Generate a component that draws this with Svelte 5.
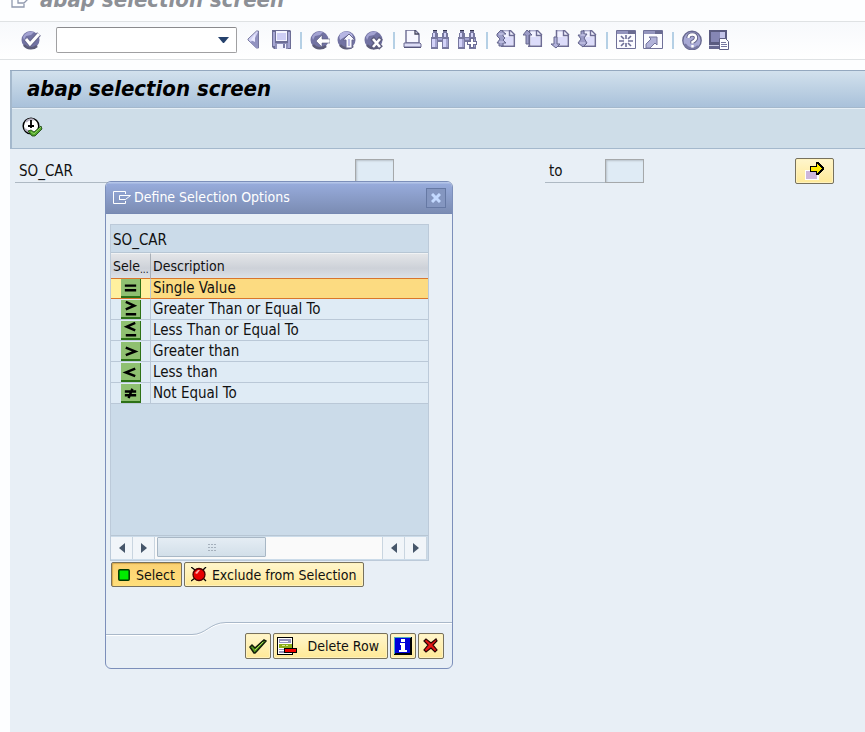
<script>
  const tools = [
    { id: 'left', label: 'Hide command field' },
    { id: 'save', label: 'Save' },
    null,
    { id: 'back', label: 'Back' },
    { id: 'exit', label: 'Exit' },
    { id: 'cancel', label: 'Cancel' },
    null,
    { id: 'print', label: 'Print' },
    { id: 'find', label: 'Find' },
    { id: 'findnext', label: 'Find next' },
    null,
    { id: 'first', label: 'First page' },
    { id: 'prev', label: 'Previous page' },
    { id: 'next', label: 'Next page' },
    { id: 'last', label: 'Last page' },
    null,
    { id: 'session', label: 'Create new session' },
    { id: 'shortcut', label: 'Generate shortcut' },
    null,
    { id: 'help', label: 'Help' },
    { id: 'layout', label: 'Customize local layout' }
  ];

  const options = [
    { text: 'Single Value', d: 'M4 7h12M4 12h12' },
    { text: 'Greater Than or Equal To', d: 'M5 2l9 4-9 4M5 15h11' },
    { text: 'Less Than or Equal To', d: 'M15 2L6 6l9 4M5 15h11' },
    { text: 'Greater than', d: 'M5 6l10 4-10 4' },
    { text: 'Less than', d: 'M15 6L5 10l10 4' },
    { text: 'Not Equal To', d: 'M4 8h12M4 12h12M12 5L8 15' }
  ];

  let selected = $state(0);
</script>

{#snippet pageShape()}
  <path d="M6 0h8l5 5v12H6z" fill="#f1f1ff" />
  <path d="M8 7h9v8H8z" fill="#dcdcfa" />
  <path d="M6 .7h8" stroke="#a9a9c9" stroke-width="1.400" />
  <path d="M6.500 0v16.300M5 16.300h14M18.300 5v12" fill="none" stroke="#6d6c94" stroke-width="1.500" />
  <path d="M13.500 0v5.500H19M14 0l5 5" fill="none" stroke="#6d6c94" stroke-width="1.400" />
{/snippet}

{#snippet ball()}
  <circle cx="9.5" cy="10" r="9" fill="#7273a3" />
  <path d="M2 7a8.5 8.5 0 0 1 11-5l-3 3-5 1-2 4z" fill="#a3a3d2" />
  <path d="M3 15a9 9 0 0 0 13 1" fill="none" stroke="#5c5c78" stroke-width="2.5" />
{/snippet}

{#snippet binoculars()}
  <path d="M3 0h4v3h1v4h4V3h1V0h4v3h1v4h1v12h-7v-7H8v7H1V7h1V3h1z" fill="#77789f" />
  <path d="M3 3h2v4H3zM14 3h2v4h-2zM2 9h3v8H2zM13 9h3v8h-3z" fill="#d2d2f8" />
  <path d="M5 9h2v8H5zM16 9h2v8h-2zM8 8h4v2H8z" fill="#a3a3cf" />
  <path d="M3 0h4v1H3zM13 0h4v1h-4z" fill="#33334f" />
{/snippet}

{#snippet toolIcon(id)}
  <svg width="20" height="20" viewBox="0 0 20 20" aria-hidden="true">
    {#if id === 'ok'}
      {@render ball()}
      <path d="M5 9l4 5 9-10" fill="none" stroke="#66668c" stroke-width="5" />
      <path d="M5 9l4 5 9-10" fill="none" stroke="#fff" stroke-width="3" />
    {:else if id === 'left'}
      <path d="M14.5 1v17h-2L4 10V9l8.500-8z" fill="#d3d3f4" stroke="#77789f" />
      <path d="M14 2v16h-2l-6-6 4-2z" fill="#9293c0" />
      <path d="M11 4v8l-4-2z" fill="#e9e9ff" />
    {:else if id === 'save'}
      <path d="M1 0h18l1 1v18H3l-2-2z" fill="#6c6d95" />
      <path d="M2 2h2v14H2zM17 2h2v16h-2z" fill="#a5a5d3" />
      <path d="M5 1h11v10H5z" fill="#f4f4ff" /><path d="M6 3h9v7H6z" fill="#ceceF5" />
      <path d="M4 13h13v6H4z" fill="#8e8fb9" /><path d="M6 14h9v5H6z" fill="#f2f2ff" />
      <path d="M12 14h2v4h-2z" fill="#7a7ba5" />
    {:else if id === 'back'}
      {@render ball()}
      <path d="M6 11l6-6v4h8v4h-8v4z" fill="#fff" stroke="#595a7a" stroke-width=".6" />
    {:else if id === 'exit'}
      {@render ball()}
      <path d="M3 4q6-5 12 0l2 6-5-6-9 6z" fill="#b6b6e3" />
      <path d="M12 4l6 6h-3v8H9v-8H6z" fill="#f9f9ff" stroke="#68688f" />
      <path d="M11 9h2v7h-2z" fill="#bdbde8" />
    {:else if id === 'cancel'}
      {@render ball()}
      <path d="M8 8l9 10M17 8L8 18" stroke="#5d5d7e" stroke-width="5" />
      <path d="M9 9l7 8M16 9l-7 8" stroke="#fff" stroke-width="2.6" />
    {:else if id === 'print'}
      <path d="M3 0h9l4 4v9H3z" fill="#f7f7ff" stroke="#6b6b92" stroke-width="1.4" />
      <path d="M12 0v4h4" fill="none" stroke="#44445f" stroke-width="1.3" />
      <path d="M1 13h16l1 1v3H1z" fill="#dcdcf5" stroke="#6b6b92" />
      <path d="M1 17h17v1H1z" fill="#55557a" />
    {:else if id === 'find'}
      {@render binoculars()}
    {:else if id === 'findnext'}
      {@render binoculars()}
      <path d="M13 8h4v3h3v4h-3v3h-4v-3h-3v-4h3z" fill="#6c6d96" />
      <path d="M14 9h2v3h3v2h-3v3h-2v-3h-3v-2h3z" fill="#fff" />
    {:else if id === 'first'}
      {@render pageShape()}
      <path d="M1 4l4-4 5 4H7v2l2 2-2 2 3 3H7v3H3v-3H1l3-4L1 6z" fill="#9d9ec8" stroke="#65668d" />
      <path d="M3 4h5M3 12h5" stroke="#d5d5f3" />
    {:else if id === 'prev'}
      {@render pageShape()}
      <path d="M0 5l4-5 5 5H6v9H3V5z" fill="#9d9dc8" stroke="#65668d" />
    {:else if id === 'next'}
      {@render pageShape()}
      <path d="M4 7h3v7h3l-4 4-5-4h3z" fill="#b1b1da" stroke="#65668d" />
    {:else if id === 'last'}
      {@render pageShape()}
      <path d="M4 1h3v3h3L7 8l3 5-4 4-5-4 3-4-3-4h3z" fill="#9d9dc8" stroke="#65668d" />
      <path d="M3 5h5M3 13h5" stroke="#d5d5f3" />
    {:else if id === 'session'}
      <path d="M.5.5h19v18H.5z" fill="#fbfbff" stroke="#6f7098" />
      <path d="M1 1h18v3H1z" fill="#9394bd" /><path d="M12 1h7v3h-7z" fill="#6a6b91" />
      <path d="M10 5v4M10 13v4M3 11h5M12 11h5M5 6l3 3M15 6l-3 3M5 16l3-3M15 16l-3-3" stroke="#6d6e96" stroke-width="1.600" />
    {:else if id === 'shortcut'}
      <path d="M.5.5h19v18H.5z" fill="#fbfbff" stroke="#6f7098" />
      <path d="M1 1h18v3H1z" fill="#9394bd" /><path d="M12 1h7v3h-7z" fill="#6a6b91" />
      <path d="M6 7h8v8l-2-2-5 5H3v-4l5-5z" fill="#b1b2d9" stroke="#74759d" />
    {:else if id === 'help'}
      <circle cx="10" cy="10.500" r="9.200" fill="#a8a9d5" stroke="#686990" stroke-width="1.4" />
      <path d="M3 14a8 8 0 0 0 13 2" fill="none" stroke="#7879a3" stroke-width="2" />
      <path d="M6.500 8q0-3.500 3.800-3.500T14 8q0 2-3.500 4v1.500" fill="none" stroke="#5d5e83" stroke-width="4.200" />
      <path d="M6.500 8q0-3.500 3.800-3.500T14 8q0 2-3.500 4v1.500M10.500 15v2.500" fill="none" stroke="#fff" stroke-width="2.400" />
    {:else}
      <path d="M0 0h18v15H0z" fill="#5a5b80" /><path d="M2 2h9v10H2z" fill="#8586b4" />
      <path d="M11 2h5v10h-5z" fill="#c3c4e8" /><path d="M0 15h18v1H0z" fill="#c6c6e2" /><path d="M0 16h11v3H0z" fill="#666790" />
      <path d="M10.500 8.500h6l3 3v8h-9z" fill="#fff" stroke="#5f6085" />
      <path d="M12 12.500h5M12 14.500h6M12 16.500h6" stroke="#77789f" />
    {/if}
  </svg>
{/snippet}

<div class="screen">
  <header class="strip">
    <svg class="strip-icon" width="19" height="14" viewBox="0 0 19 14" aria-hidden="true">
      <path d="M14 0H1v12h12V9M6 3h12L13 8H7V3" fill="none" stroke="#9099ae" stroke-width="1.300" />
    </svg>
    <span>abap selection screen</span>
  </header>

  <nav class="toolbar" aria-label="Standard toolbar">
    <button class="tool" aria-label="Enter">{@render toolIcon('ok')}</button>
    <div class="command">
      <select aria-label="Command"><option></option></select>
      <svg width="11" height="6" viewBox="0 0 11 6" aria-hidden="true"><path d="M0 0h11L6 6H5z" fill="#26426d" /></svg>
    </div>
    {#each tools as tool}
      {#if tool}
        <button class="tool" aria-label={tool.label}>{@render toolIcon(tool.id)}</button>
      {:else}
        <span class="sep"></span>
      {/if}
    {/each}
  </nav>

  <main>
    <h1>abap selection screen</h1>
    <div class="actions">
      <button class="tool" aria-label="Execute">
        <svg width="22" height="21" viewBox="0 0 22 21" aria-hidden="true">
          <circle cx="9" cy="9" r="7.800" fill="#fff" stroke="#000" stroke-width="1.500" />
          <path d="M4 5a6 6 0 0 1 8-2M3 12l4 3" fill="none" stroke="#b9b3c3" stroke-width="2" />
          <path d="M9 3v8M6 9h6" stroke="#000" stroke-width="1.800" />
          <path d="M6 14l3-1 3 2 7-6 1 3-7 7h-3z" fill="#51a52b" stroke="#173d0c" stroke-width=".8" />
          <path d="M9 15l3 2 7-7" fill="none" stroke="#8bd05c" stroke-width="1" />
        </svg>
      </button>
    </div>
    <form class="fields" onsubmit={(e) => e.preventDefault()}>
      <label class="from" for="low">SO_CAR</label>
      <input id="low" type="text" />
      <label class="to" for="high">to</label>
      <input id="high" type="text" />
      <button class="btn multiple" type="button" aria-label="Multiple selection">
        <svg width="20" height="18" viewBox="0 0 20 18" shape-rendering="crispEdges" aria-hidden="true">
          <path d="M0 8h14v10H0z" fill="#fff" /><path d="M1 9h11v8H1z" fill="#cdb6dc" />
          <path d="M5 4h6V0h2l6 6v1l-6 6h-2v-3H5z" fill="#000" />
          <path d="M6 5h6V2l5 5-5 4V9H6z" fill="#ffea00" />
        </svg>
      </button>
    </form>
  </main>

  <div class="dialog" role="dialog" aria-labelledby="dialog-title">
    <div class="titlebar">
      <svg width="18" height="14" viewBox="0 0 18 14" aria-hidden="true">
        <path d="M12.500 3V.5H.5v12h12V10M6.500 9V4.500h11l-5 4h-6" fill="none" stroke="#fff" />
      </svg>
      <h2 id="dialog-title">Define Selection Options</h2>
      <button class="close" aria-label="Close">
        <svg width="10" height="10" viewBox="0 0 10 10" aria-hidden="true"><path d="M1 1l8 8M9 1L1 9" stroke="#c3d9ff" stroke-width="3" /></svg>
      </button>
    </div>

    <div class="grid">
      <div class="caption">SO_CAR</div>
      <table>
        <thead>
          <tr><th class="kind">Sele<small>...</small></th><th>Description</th></tr>
        </thead>
        <tbody>
          {#each options as option, i}
            <tr class:selected={i === selected} onclick={() => (selected = i)}>
              <td class="kind">
                <svg class="sign" width="20" height="18" viewBox="0 0 20 18" aria-hidden="true">
                  <path d={option.d} fill="none" stroke="#000" stroke-width="2.600" />
                </svg>
              </td>
              <td>{option.text}</td>
            </tr>
          {/each}
        </tbody>
      </table>
      <div class="scroll">
        {#each ['left', 'right', 'track', 'left', 'right'] as part}
          {#if part === 'track'}
            <div class="track"><div class="thumb">
              <svg width="8" height="7" viewBox="0 0 8 7" shape-rendering="crispEdges" aria-hidden="true">
                <path d="M0 0h2v1H0zM3 0h2v1H3zM6 0h2v1H6zM0 3h2v1H0zM3 3h2v1H3zM6 3h2v1H6zM0 6h2v1H0zM3 6h2v1H3zM6 6h2v1H6z" fill="#a5b0bc" />
              </svg>
            </div></div>
          {:else}
            <button aria-label="Scroll {part}">
              <svg width="6" height="10" viewBox="0 0 6 10" aria-hidden="true">
                <path d={part === 'left' ? 'M6 0v10L0 5z' : 'M0 0v10l6-5z'} fill="#46566a" />
              </svg>
            </button>
          {/if}
        {/each}
      </div>
    </div>

    <div class="modes">
      <button class="btn pressed">
        <svg width="12" height="12" viewBox="0 0 12 12" aria-hidden="true">
          <rect x=".8" y=".8" width="10.400" height="10.400" rx="1" fill="#00ed00" stroke="#003800" stroke-width="1.500" />
        </svg>
        Select
      </button>
      <button class="btn exclude">
        <svg width="16" height="15" viewBox="0 0 16 15" aria-hidden="true">
          <path d="M0 0l4 3M15 0l-3 3M0 14l4-3M15 14l-3-3" stroke="#000" stroke-width="1.300" />
          <circle cx="8" cy="7.500" r="6" fill="#e60000" stroke="#400" stroke-width="1.300" />
          <path d="M4 6l3-3h2L6 7z" fill="#ffa8a8" />
        </svg>
        Exclude from Selection
      </button>
    </div>

    <footer>
      <svg class="edge" width="100%" height="15" aria-hidden="true">
        <path d="M0 14.500h86c14 0 18-12 34-12h2000" fill="none" stroke="#fff" />
        <path d="M0 13.500h86c14 0 18-12 34-12h2000" fill="none" stroke="#a9b8c9" />
      </svg>
      <div class="buttons">
        <button class="btn icon" aria-label="Continue">
          <svg width="18" height="16" viewBox="0 0 18 16" aria-hidden="true">
            <path d="M1 9l2-2 3 3 9-8 2 1-9 10-2 2H5z" fill="#5b9e22" stroke="#101c08" stroke-width="1.500" />
            <path d="M6 12l8-8" stroke="#a4da52" stroke-width="1" />
          </svg>
        </button>
        <button class="btn delete">
          <svg width="20" height="18" viewBox="0 0 20 18" shape-rendering="crispEdges" aria-hidden="true">
            <path d="M0 0h16v18H0z" fill="#000" /><path d="M1 1h14v16H1z" fill="#fff" />
            <path d="M2 2h12v4H2zM2 12h5v1H2zM2 14h10v2H2z" fill="#9492bb" /><path d="M3 4h8v1H3z" fill="#fff" />
            <path d="M2 7h13v4H2z" fill="#8cae19" /><path d="M5 8h3v1H5zM9 8h2v1H9z" fill="#d8e89a" />
            <path d="M7 11h13v5H7z" fill="#000" /><path d="M8 12h11v3H8z" fill="#f00000" />
          </svg>
          Delete Row
        </button>
        <button class="btn icon" aria-label="Information">
          <svg width="18" height="18" viewBox="0 0 18 18" shape-rendering="crispEdges" aria-hidden="true">
            <path d="M0 0h18v18H0z" fill="#000" /><path d="M0 0h17v1H1v16H0z" fill="#4baabf" />
            <path d="M1 1h15v15H1z" fill="#0000d8" />
            <path d="M7 2h4v3H7zM6 6h5v7h2v2H5v-2h2V8H6z" fill="#fff" />
          </svg>
        </button>
        <button class="btn icon" aria-label="Cancel">
          <svg width="16" height="16" viewBox="0 0 16 16" aria-hidden="true">
            <path d="M1 3l2-2 5 4 5-4 1 2-4 4 4 5-2 2-4-4-5 4-2-2 4-5z" fill="#e51616" stroke="#260404" stroke-width="1.200" />
          </svg>
        </button>
      </div>
    </footer>
  </div>
</div>

<style>
  :global(body) { margin: 0; background: #fdfeff; }
  .screen {
    position: relative;
    display: flex;
    flex-direction: column;
    min-height: 100vh;
    overflow: hidden;
    color: #111;
    font: 14px/20px "DejaVu Sans Condensed", "Noto Sans", sans-serif;
  }
  *, *::before { box-sizing: border-box; }
  svg { display: block; flex: none; }
  button, input, select { font: inherit; color: inherit; margin: 0; padding: 0; }
  .strip {
    display: flex;
    align-items: flex-end;
    gap: 10px;
    height: 22px;
    padding: 0 0 8px 11px;
    overflow: hidden;
    border-bottom: 1px solid #dfe2e4;
    color: #8d9096;
    font: italic bold 22px/26px "DejaVu Sans Condensed", sans-serif;
    white-space: nowrap;
  }
  .strip-icon { margin-bottom: 4px; }
  .toolbar {
    display: flex;
    align-items: center;
    height: 38px;
    padding: 0 0 1px 18px;
    border-bottom: 1px solid #dfe2e4;
    background: linear-gradient(#f7f9fc, #fff);
  }
  .tool {
    display: flex;
    flex: none;
    align-items: center;
    width: 27px;
    height: 26px;
    padding-left: 3px;
    border: 0;
    background: none;
  }
  .command { position: relative; width: 181px; margin: 0 4px 0 11px; }
  .command select {
    display: block;
    width: 100%;
    height: 26px;
    appearance: none;
    border: 1px solid #a0a0a2;
    border-top-color: #8a8a8d;
    border-radius: 2px;
    background: #fff;
  }
  .command svg { position: absolute; top: 10px; right: 8px; pointer-events: none; }
  .sep { display: flex; flex: none; justify-content: center; width: 12px; }
  .sep::before { content: ""; width: 2px; height: 17px; background: #b5d0e5; }
  main {
    flex: 1;
    margin: 10px 0 0 10px;
    border-top: 1px solid #94a8bf;
    background: #e8eff6;
  }
  h1 {
    margin: 0;
    padding: 0 15px;
    border: solid #a4b8cc;
    border-width: 0 0 1px 2px;
    background: linear-gradient(#d2e1ed, #a9c1da);
    color: #000;
    font: italic bold 22px/36px "DejaVu Sans Condensed", sans-serif;
    white-space: nowrap;
  }
  .actions {
    height: 41px;
    padding: 6px 0 0 8px;
    border: solid #a4b8cc;
    border-width: 0 0 1px 2px;
    background: #cedde8;
    box-shadow: inset 0 1px #e6eff6;
  }
  .actions .tool { padding-left: 2px; }
  .fields { display: flex; align-items: center; padding: 9px 0 0 5px; }
  .fields label {
    flex: none;
    height: 24px;
    padding-left: 4px;
    border-bottom: 1px solid #aeb9c3;
    font-size: 15px;
    line-height: 25px;
  }
  .from { width: 340px; }
  .to { width: 60px; margin-left: 151px; }
  .fields input {
    width: 39px;
    height: 24px;
    border: 1px solid #a5a8aa;
    background: #dfebf5;
    box-shadow: inset 1px 1px 2px #b9c2ca;
    outline: 0;
  }
  .btn {
    display: flex;
    flex: none;
    align-items: center;
    justify-content: center;
    height: 26px;
    padding: 0 5px;
    border: 1px solid #77715d;
    border-radius: 2px;
    background: linear-gradient(#fff6cd, #ffe997);
    box-shadow: inset 0 0 0 1px #fff2bd;
    color: #111;
    white-space: nowrap;
  }
  .multiple { width: 39px; margin-left: 151px; }
  .dialog {
    position: absolute;
    top: 181px;
    left: 105px;
    display: flex;
    flex-direction: column;
    width: 348px;
    border: 1px solid #7c8fba;
    border-radius: 6px;
    background: #e8eff6;
    overflow: hidden;
  }
  .titlebar {
    display: flex;
    align-items: center;
    gap: 3px;
    height: 32px;
    padding: 0 6px 0 7px;
    border-bottom: 1px solid #7688b2;
    background: linear-gradient(#b4c5e8 0 1px, #97abdb 2px, #7b8cb3);
    color: #fff;
  }
  h2 { flex: 1; margin: 0; padding-bottom: 2px; font: inherit; }
  .close {
    display: grid;
    place-items: center;
    width: 20px;
    height: 20px;
    border: 1px solid #6679a4;
    background: #8496c0;
  }
  .grid {
    display: flex;
    flex-direction: column;
    height: 337px;
    margin: 10px 23px 0 4px;
    border: 1px solid #bccad9;
    background: #cbdbe9;
    font-size: 15px;
  }
  .caption { height: 28px; padding-left: 2px; border-bottom: 1px solid #b7c6d4; line-height: 30px; }
  table { width: 100%; table-layout: fixed; border-collapse: separate; border-spacing: 0; }
  th {
    height: 25px;
    padding: 0 2px;
    background: linear-gradient(#e3e5e8, #cdd1d8 60%, #dce1e7);
    font-size: 14px;
    font-weight: normal;
    text-align: left;
    white-space: nowrap;
    border-top: 1px solid #f0f2f4;
  }
  th.kind { width: 40px; border-right: 1px solid #a9b0b8; overflow: hidden; }
  small { font-size: 10px; line-height: 1px; vertical-align: -2px; }
  td { height: 21px; padding: 0 2px; border-bottom: 1px solid #bac8d7; background: #dfebf5; line-height: 19px; }
  td.kind { padding: 0 0 0 10px; border-right: 1px solid #bac8d7; }
  .selected td {
    border-top: 1px solid #d9762c;
    border-bottom-color: #d9762c;
    background: #fcdb81;
  }
  .selected .kind { background: #fff09e; }
  .sign { border: solid #2d7116; border-width: 0 1px 2px 0; background: #8fc071; height: 19px; }
  .scroll { display: flex; height: 25px; margin-top: auto; padding: 1px 1px 1px 0; border-top: 1px solid #b7c6d4; }
  .scroll button {
    display: grid;
    place-items: center;
    flex: none;
    width: 22px;
    border: 0;
    border-right: 1px solid #c9d5e0;
    background: #f1f5f9;
  }
  .track { flex: 1; padding: 0 2px; border-right: 1px solid #c9d5e0; background: #fafafa; }
  .thumb {
    display: grid;
    place-items: center;
    width: 49%;
    height: 20px;
    border: 1px solid #a8b7c5;
    border-radius: 1px;
    background: linear-gradient(#e5edf4, #d2dfe9);
  }
  .modes { display: flex; gap: 2px; margin: 1px 0 0 5px; }
  .modes .btn { height: 25px; gap: 6px; padding: 0 6px; }
  .modes .exclude { gap: 5px; }
  .pressed { background: linear-gradient(#fbd173, #ffdf7b); box-shadow: inset 1px 1px 1px #d5a84c; }
  footer { margin-top: 34px; }
  .edge { overflow: hidden; }
  .buttons { display: flex; justify-content: flex-end; gap: 2px; margin: -3px 8px 9px; }
  .icon { width: 26px; padding: 0; }
  .delete { gap: 10px; padding: 0 8px 0 3px; }
</style>
